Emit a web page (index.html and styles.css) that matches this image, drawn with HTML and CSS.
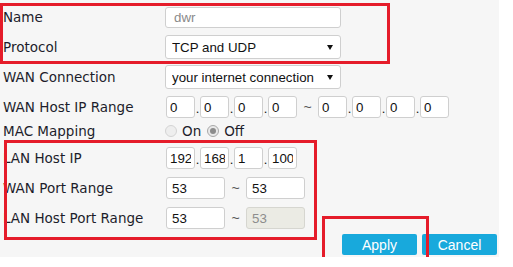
FILE: index.html
```html
<!DOCTYPE html>
<html lang="en">
<head>
    <meta charset="UTF-8">
    <title>Port Forwarding</title>
    <link rel="stylesheet" href="styles.css">
</head>
<body>

    <div class="panel">

        <div class="group">
            <div class="row">
                <label class="label">Name</label>
                <input class="field field-wide field-muted" type="text" value="dwr">
            </div>
            <div class="row">
                <label class="label">Protocol</label>
                <div class="select-wrap">
                    <select class="field field-wide field-select">
                        <option>TCP and UDP</option>
                    </select>
                </div>
            </div>
            <div class="row">
                <label class="label">WAN Connection</label>
                <div class="select-wrap">
                    <select class="field field-wide field-select">
                        <option>your internet connection</option>
                    </select>
                </div>
            </div>
            <div class="row">
                <label class="label">WAN Host IP Range</label>
                <div class="ip-line">
                    <input class="field ip-box" type="text" value="0">
                    <span class="dot">.</span>
                    <input class="field ip-box" type="text" value="0">
                    <span class="dot">.</span>
                    <input class="field ip-box" type="text" value="0">
                    <span class="dot">.</span>
                    <input class="field ip-box" type="text" value="0">
                    <span class="tilde">~</span>
                    <input class="field ip-box" type="text" value="0">
                    <span class="dot">.</span>
                    <input class="field ip-box" type="text" value="0">
                    <span class="dot">.</span>
                    <input class="field ip-box" type="text" value="0">
                    <span class="dot">.</span>
                    <input class="field ip-box" type="text" value="0">
                </div>
            </div>
        </div>

        <div class="row row-short">
            <label class="label">MAC Mapping</label>
            <div class="radios">
                <input class="radio" type="radio" name="mac" disabled>
                <span class="radio-text">On</span>
                <input class="radio" type="radio" name="mac" checked disabled>
                <span class="radio-text">Off</span>
            </div>
        </div>

        <div class="group group-lan">
            <div class="row">
                <label class="label">LAN Host IP</label>
                <div class="ip-line">
                    <input class="field ip-box" type="text" value="192">
                    <span class="dot">.</span>
                    <input class="field ip-box" type="text" value="168">
                    <span class="dot">.</span>
                    <input class="field ip-box" type="text" value="1">
                    <span class="dot">.</span>
                    <input class="field ip-box" type="text" value="100">
                </div>
            </div>
            <div class="row">
                <label class="label">WAN Port Range</label>
                <div class="ip-line">
                    <input class="field port-box" type="text" value="53">
                    <span class="tilde">~</span>
                    <input class="field port-box" type="text" value="53">
                </div>
            </div>
            <div class="row">
                <label class="label">LAN Host Port Range</label>
                <div class="ip-line">
                    <input class="field port-box" type="text" value="53">
                    <span class="tilde">~</span>
                    <input class="field port-box" type="text" value="53" disabled>
                </div>
            </div>
        </div>

        <div class="actions">
            <button class="btn">Apply</button>
            <button class="btn">Cancel</button>
        </div>

        <!-- red annotation frames -->
        <div class="mark mark-top"></div>
        <div class="mark mark-lan"></div>
        <div class="mark mark-apply"></div>
    </div>

</body>
</html>
```

FILE: styles.css
```css
body {
    margin: 0;
    background-color: white;
    font-family: "DejaVu Sans", Verdana, sans-serif;
    color: #333;
}

.panel {
    position: relative;
    width: 494px;
    height: 255px;
    padding: 2px 2px 0 3px;
    background-color: #f6f6f6;
}

.row {
    display: grid;
    grid-template-columns: 162px auto;
    align-items: center;
    height: 30px;
}

.label {
    font-size: 13.5px;
    color: #1d1d2b;
    white-space: nowrap;
}

.row-short {
    height: 18px;
}

.group-lan {
    padding-top: 3px;
}

/* inputs */
.field {
    box-sizing: border-box;
    margin: 0;
    font-family: "Liberation Sans", Arial, sans-serif;
    font-size: 13.3px;
    color: #111;
    background-color: white;
    border: 1px solid #cfcfcf;
    border-radius: 3px;
    outline: none;
}

.field-wide {
    width: 176px;
    height: 21px;
    padding: 0 8px;
}

.field-muted {
    color: #8a8a8a;
}

.select-wrap {
    position: relative;
    width: 176px;
}

.field-select {
    appearance: none;
    -webkit-appearance: none;
    height: 24px;
    padding: 0 6px;
}

.select-wrap::after {
    content: "";
    position: absolute;
    right: 8px;
    top: 10px;
    border-left: 3px solid transparent;
    border-right: 3px solid transparent;
    border-top: 5px solid #111;
    pointer-events: none;
}

.ip-line {
    display: flex;
    align-items: center;
    padding-left: 1px;
}

.ip-box {
    width: 29px;
    height: 22px;
    padding: 0 3px;
}

.port-box {
    width: 59px;
    height: 22px;
    padding: 0 5px;
}

.port-box:disabled {
    background-color: #ebebe4;
    color: #8d8d8d;
    border-color: #d6d6d0;
}

.dot {
    width: 5px;
    text-align: center;
    font-family: "Liberation Sans", Arial, sans-serif;
    font-size: 13px;
    color: #111;
    padding-top: 3px;
}

.tilde {
    width: 21px;
    text-align: center;
    font-family: "Liberation Sans", Arial, sans-serif;
    font-size: 14px;
    color: #555;
}

/* radio buttons */
.radios {
    display: flex;
    align-items: center;
}

.radio {
    appearance: none;
    -webkit-appearance: none;
    width: 12px;
    height: 12px;
    margin: 0;
    border: 1px solid #d4d4d4;
    border-radius: 50%;
    background-color: #eee;
    position: relative;
}

.radio:checked {
    border-color: #a9a9a9;
    background-color: #e9e9e9;
}

.radio:checked::after {
    content: "";
    position: absolute;
    left: 2px;
    top: 2px;
    width: 6px;
    height: 6px;
    border-radius: 50%;
    background-color: #8c8c8c;
}

.radio-text {
    font-size: 13.5px;
    color: #1d1d2b;
    margin: 0 6px 0 5px;
}

/* buttons */
.actions {
    display: flex;
    justify-content: flex-end;
    gap: 5px;
    margin-top: 1px;
}

.btn {
    width: 75px;
    height: 21px;
    padding: 0;
    border: none;
    border-radius: 2px;
    background-color: #18a9dc;
    color: white;
    font-family: "Liberation Sans", Arial, sans-serif;
    font-size: 14px;
}

/* red annotation frames */
.mark {
    position: absolute;
    border: 3px solid #e51c2a;
}

.mark-top {
    left: 0;
    top: 3px;
    width: 384px;
    height: 55px;
}

.mark-lan {
    left: 4px;
    top: 140px;
    width: 307px;
    height: 94px;
}

.mark-apply {
    left: 322px;
    top: 216px;
    width: 101px;
    height: 41px;
}
```
